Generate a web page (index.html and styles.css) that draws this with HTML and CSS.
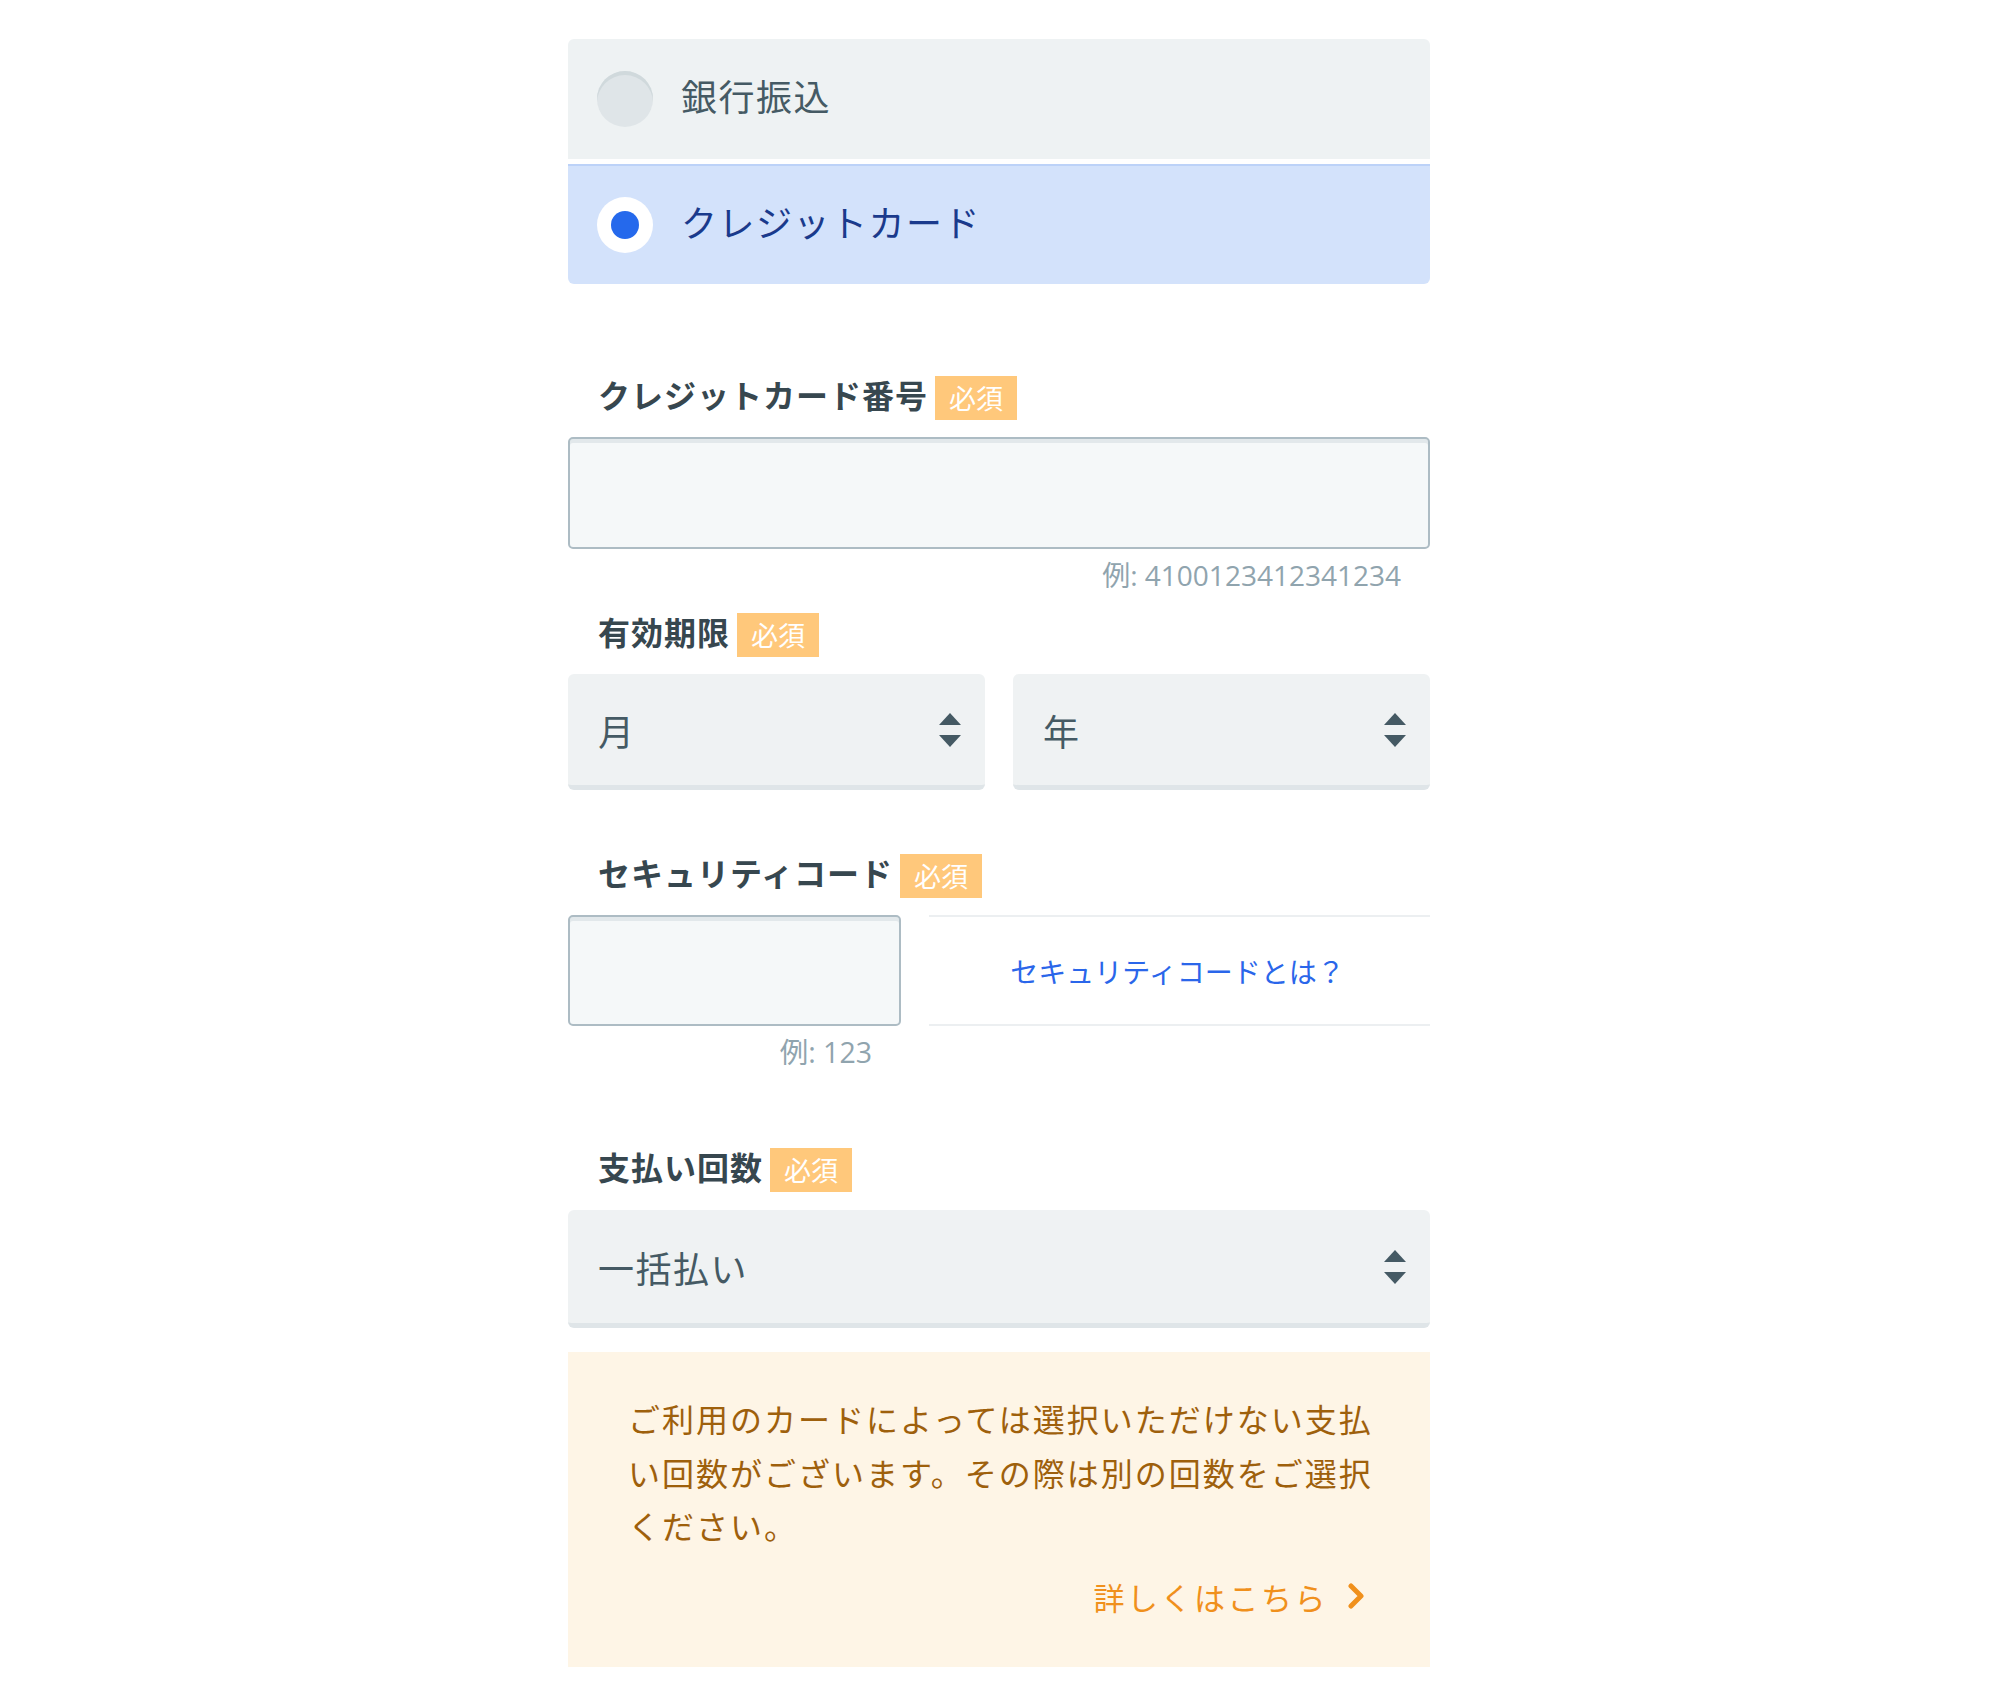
FILE: index.html
```html
<!DOCTYPE html>
<html lang="ja">
<head>
<meta charset="utf-8">
<title>お支払い方法</title>
<link rel="stylesheet" href="styles.css">
</head>
<body>
<div class="form">
  <div class="methods">
    <div class="method method-bank">
      <span class="radio"></span>
      <span class="method-text">銀行振込</span>
    </div>
    <div class="method method-card">
      <span class="radio radio-checked"><span class="radio-dot"></span></span>
      <span class="method-text">クレジットカード</span>
    </div>
  </div>

  <div class="label-row label-card">
    <span class="label-text">クレジットカード番号</span>
    <span class="badge">必須</span>
  </div>
  <input class="input input-full" type="text">
  <div class="hint">例: 4100123412341234</div>

  <div class="label-row label-expiry">
    <span class="label-text">有効期限</span>
    <span class="badge">必須</span>
  </div>
  <div class="select-pair">
    <div class="select">
      <span class="select-text">月</span>
      <svg class="select-arrow" width="22" height="34" viewBox="0 0 22 34"><polygon points="0,12 11,0 22,12"/><polygon points="0,22 22,22 11,34"/></svg>
    </div>
    <div class="select">
      <span class="select-text">年</span>
      <svg class="select-arrow" width="22" height="34" viewBox="0 0 22 34"><polygon points="0,12 11,0 22,12"/><polygon points="0,22 22,22 11,34"/></svg>
    </div>
  </div>

  <div class="label-row label-security">
    <span class="label-text">セキュリティコード</span>
    <span class="badge">必須</span>
  </div>
  <div class="security-row">
    <div class="security-col">
      <input class="input input-small" type="text">
      <div class="hint hint-small">例: 123</div>
    </div>
    <div class="security-link">
      <a class="link-blue" href="#">セキュリティコードとは？</a>
    </div>
  </div>

  <div class="label-row label-count">
    <span class="label-text">支払い回数</span>
    <span class="badge">必須</span>
  </div>
  <div class="select select-full">
    <span class="select-text">一括払い</span>
    <svg class="select-arrow" width="22" height="34" viewBox="0 0 22 34"><polygon points="0,12 11,0 22,12"/><polygon points="0,22 22,22 11,34"/></svg>
  </div>

  <div class="notice">
    <p class="notice-text">ご利用のカードによっては選択いただけない支払い回数がございます。その際は別の回数をご選択ください。</p>
    <div class="notice-link-row">
      <a class="notice-link" href="#">詳しくはこちら<svg class="chevron" width="20" height="26" viewBox="0 0 20 26"><polyline points="5,3 15,13 5,23"/></svg></a>
    </div>
  </div>
</div>
</body>
</html>
```

FILE: styles.css
```css
html, body {
  margin: 0;
  padding: 0;
  background: #ffffff;
}

body {
  font-family: "Noto Sans CJK JP", "Noto Sans", sans-serif;
  color: #37474f;
}

.form {
  width: 862px;
  margin-left: 568px;
  padding-top: 39px;
  padding-bottom: 39px;
}

.methods {
  display: flex;
  flex-direction: column;
  gap: 5px;
}

.method {
  box-sizing: border-box;
  height: 120px;
  display: flex;
  align-items: center;
  padding-left: 29px;
  gap: 28px;
}

.method-bank {
  background: #eef2f3;
  border-radius: 6px 6px 0 0;
  color: #455a64;
}

.method-card {
  background: #d3e2fb;
  border-top: 2px solid #bcd2f8;
  border-radius: 0 0 6px 6px;
  color: #1a3a8c;
}

.method-text {
  font-size: 36px;
  letter-spacing: 1.5px;
  line-height: 48px;
  padding-bottom: 8px;
}

.radio {
  width: 56px;
  height: 56px;
  border-radius: 50%;
  background: #dfe5e8;
  box-shadow: inset 0 4px 0 #d0d9dc;
  display: flex;
  align-items: center;
  justify-content: center;
  flex: none;
}

.radio-checked {
  background: #ffffff;
  box-shadow: none;
}

.radio-dot {
  width: 28px;
  height: 28px;
  border-radius: 50%;
  background: #2569ec;
}

.label-row {
  display: flex;
  align-items: center;
  height: 44px;
  padding-left: 30px;
  gap: 7px;
}

.label-card { margin-top: 92px; }
.label-expiry { margin-top: 18px; }
.label-security { margin-top: 64px; }
.label-count { margin-top: 76px; }

.label-text {
  font-size: 32px;
  font-weight: 700;
  letter-spacing: 1px;
  line-height: 36px;
  padding-bottom: 8px;
  color: #37474f;
}

.badge {
  height: 44px;
  line-height: 44px;
  padding: 0 14px;
  background: #ffc87b;
  color: #ffffff;
  font-size: 27px;
}

.input {
  display: block;
  box-sizing: border-box;
  margin: 17px 0 0 0;
  padding: 0 24px;
  height: 112px;
  border: 2px solid #adbcc4;
  border-radius: 5px;
  background: #f5f8f9;
  box-shadow: inset 0 4px 0 #e2e8eb;
  font-family: inherit;
  font-size: 32px;
  outline: none;
}

.input-full { width: 862px; }

.input-small {
  width: 333px;
  height: 111px;
  margin-top: 0;
}

.hint {
  margin-top: 6px;
  padding-right: 29px;
  text-align: right;
  font-family: "Open Sans", "Noto Sans CJK JP", sans-serif;
  font-size: 28px;
  line-height: 40px;
  color: #90a4ae;
}

.hint-small {
  margin-top: 6px;
  padding-right: 29px;
  font-size: 28.5px;
}

.select-pair {
  display: grid;
  grid-template-columns: 1fr 1fr;
  gap: 28px;
  margin-top: 17px;
}

.select {
  box-sizing: border-box;
  height: 116px;
  display: flex;
  align-items: center;
  justify-content: space-between;
  padding: 0 24px 0 30px;
  background: #eff2f3;
  border-bottom: 5px solid #dfe5e8;
  border-radius: 6px;
}

.select-full {
  margin-top: 18px;
  height: 118px;
}

.select-text {
  font-size: 36px;
  line-height: 48px;
  color: #455a64;
  letter-spacing: 1.5px;
}

.select-arrow {
  fill: #455a64;
  flex: none;
}

.security-row {
  display: flex;
  gap: 28px;
  margin-top: 17px;
}

.security-col {
  width: 333px;
  flex: none;
}

.security-link {
  box-sizing: border-box;
  flex: 1;
  height: 111px;
  border-top: 2px solid #eceff1;
  border-bottom: 2px solid #eceff1;
  display: flex;
  align-items: center;
  justify-content: center;
  padding-right: 4px;
}

.link-blue {
  color: #2a66ea;
  font-size: 28px;
  line-height: 40px;
  text-decoration: none;
}

.notice {
  margin-top: 24px;
  background: #fef5e6;
  padding: 40px 48px 44px 60px;
}

.notice-text {
  margin: 0;
  font-size: 32px;
  line-height: 53.5px;
  letter-spacing: 2px;
  color: #9e600c;
}

.notice-link-row {
  margin-top: 17px;
  display: flex;
  justify-content: flex-end;
  padding-right: 16px;
}

.notice-link {
  display: flex;
  align-items: center;
  gap: 18px;
  font-size: 31px;
  line-height: 53.5px;
  letter-spacing: 2.5px;
  color: #f0901c;
  text-decoration: none;
}

.chevron {
  fill: none;
  stroke: #f0901c;
  stroke-width: 5;
  stroke-linecap: round;
  stroke-linejoin: round;
}
```
